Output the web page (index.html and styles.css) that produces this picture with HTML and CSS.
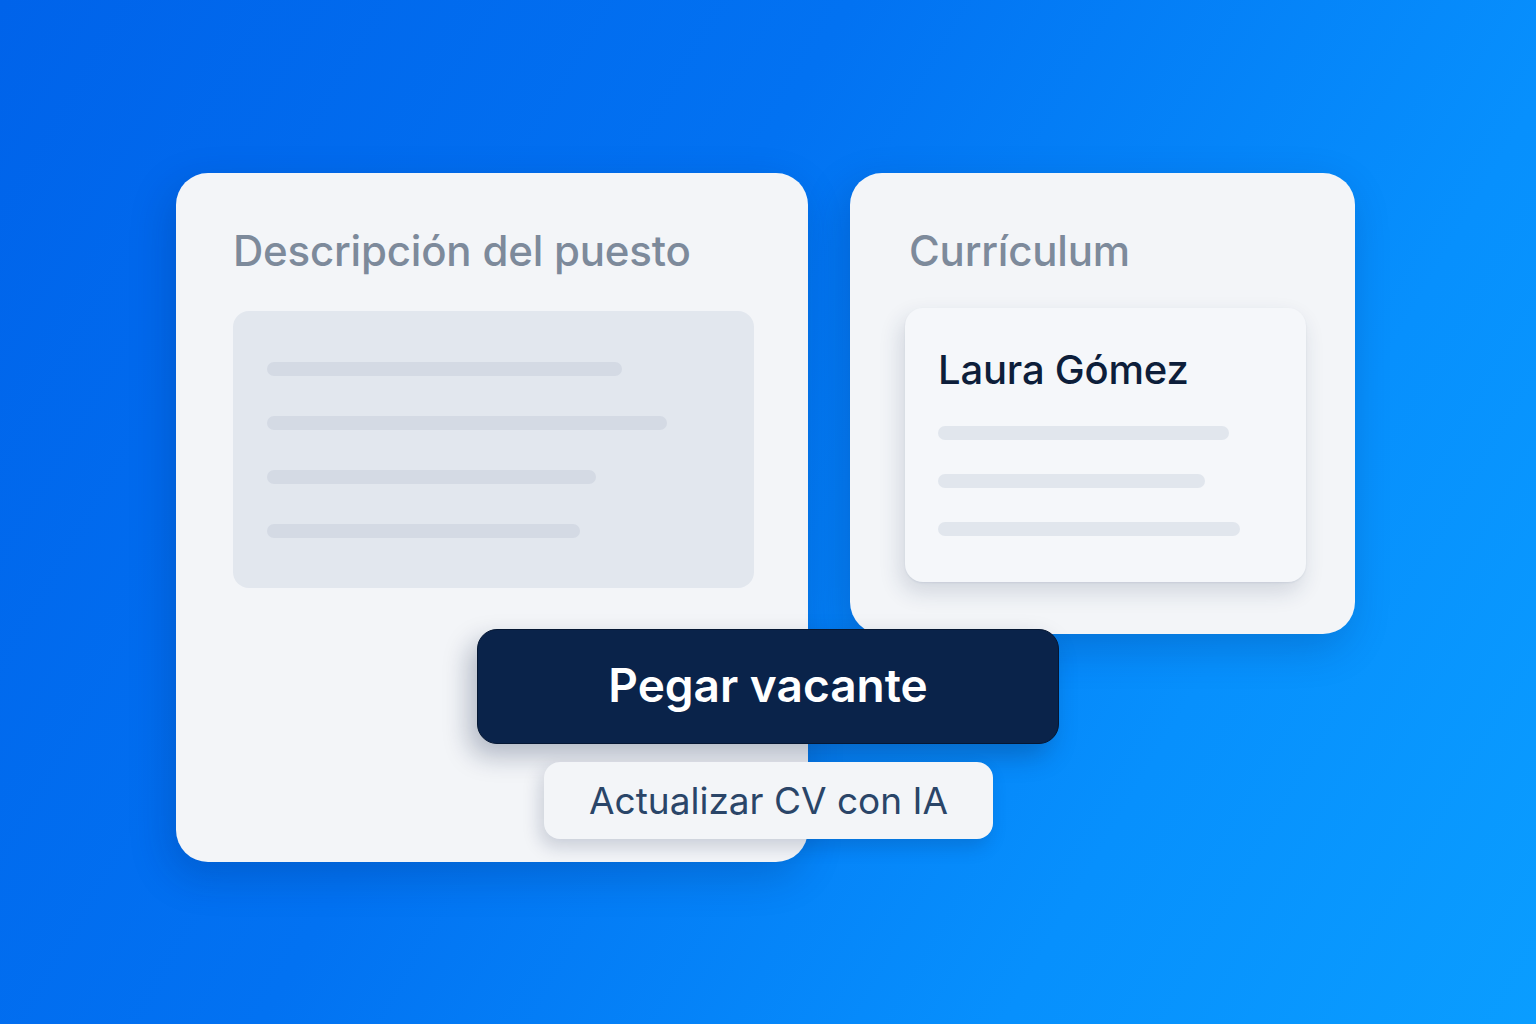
FILE: index.html
```html
<!DOCTYPE html>
<html>

<head>
    <title>Actualizar CV</title>
    <link rel="stylesheet" href="styles.css">
</head>

<body>
    <div class="stage">
        <div class="card card-job">
            <h2 class="card-title">Descripción del puesto</h2>
            <div class="job-box">
                <div class="bar bar-job" style="width: 355px;"></div>
                <div class="bar bar-job" style="width: 400px;"></div>
                <div class="bar bar-job" style="width: 329px;"></div>
                <div class="bar bar-job" style="width: 313px;"></div>
            </div>
        </div>

        <div class="card card-cv">
            <h2 class="card-title">Currículum</h2>
            <div class="cv-sheet">
                <h3 class="cv-name">Laura Gómez</h3>
                <div class="cv-lines">
                    <div class="bar bar-cv" style="width: 291px;"></div>
                    <div class="bar bar-cv" style="width: 267px;"></div>
                    <div class="bar bar-cv" style="width: 302px;"></div>
                </div>
            </div>
        </div>

        <button class="btn btn-paste">Pegar vacante</button>
        <button class="btn btn-update">Actualizar CV con IA</button>
    </div>
</body>

</html>
```

FILE: styles.css
```css
html,
body {
    margin: 0;
    padding: 0;
    height: 100%;
}

body {
    background: linear-gradient(120deg, #0063ea 0%, #0272f2 40%, #0790fd 75%, #0a9dff 100%);
    font-family: Inter, "Noto Sans", sans-serif;
    overflow: hidden;
}

.stage {
    position: relative;
    display: flex;
    align-items: flex-start;
    gap: 42px;
    padding: 173px 0 0 176px;
}

.card {
    box-sizing: border-box;
    background-color: #f3f5f8;
    border-radius: 32px;
    box-shadow: -6px 14px 40px rgba(0, 30, 90, 0.22);
}

.card-job {
    width: 632px;
    height: 689px;
    padding: 52px 54px 0 57px;
}

.card-cv {
    width: 505px;
    height: 461px;
    padding: 52px 49px 0 55px;
}

.card-title {
    margin: 0;
    font-size: 42px;
    font-weight: 500;
    line-height: 52px;
    color: #7d8a9b;
    letter-spacing: -0.2px;
}

.card-cv .card-title {
    margin-left: 4px;
}

.job-box {
    margin-top: 34px;
    height: 277px;
    box-sizing: border-box;
    padding: 51px 34px 0 34px;
    background-color: #e2e7ee;
    border-radius: 16px;
    display: flex;
    flex-direction: column;
    gap: 40px;
}

.bar {
    height: 14px;
    border-radius: 7px;
}

.bar-job {
    background-color: #d4dae4;
}

.bar-cv {
    background-color: #e1e6ed;
}

.cv-sheet {
    box-sizing: border-box;
    margin-top: 31px;
    width: 401px;
    height: 274px;
    padding: 37px 32px 0 33px;
    background-color: #f5f7fa;
    border-radius: 18px;
    box-shadow: -4px 10px 22px rgba(30, 50, 90, 0.16), 0 1px 2px rgba(30, 50, 90, 0.08);
}

.cv-name {
    margin: 0;
    font-size: 40px;
    font-weight: 500;
    line-height: 50px;
    color: #0d1e3a;
    letter-spacing: -0.2px;
}

.cv-lines {
    margin-top: 31px;
    display: flex;
    flex-direction: column;
    gap: 34px;
}

/* botones que se montan encima de las dos tarjetas */
.btn {
    position: absolute;
    box-sizing: border-box;
    font-family: Inter, "Noto Sans", sans-serif;
    cursor: pointer;
}

.btn-paste {
    left: 477px;
    top: 629px;
    width: 582px;
    height: 115px;
    border: 1px solid #051733;
    border-radius: 20px;
    background-color: #0a234a;
    color: #ffffff;
    font-size: 46px;
    font-weight: 600;
    padding-bottom: 4px;
    box-shadow: -8px 12px 26px rgba(10, 30, 70, 0.28);
}

.btn-update {
    left: 544px;
    top: 762px;
    width: 449px;
    height: 77px;
    border: none;
    border-radius: 16px;
    background-color: #f3f5f8;
    color: #2a4568;
    font-size: 37px;
    font-weight: 400;
    box-shadow: -4px 8px 18px rgba(10, 30, 70, 0.18);
}
```
